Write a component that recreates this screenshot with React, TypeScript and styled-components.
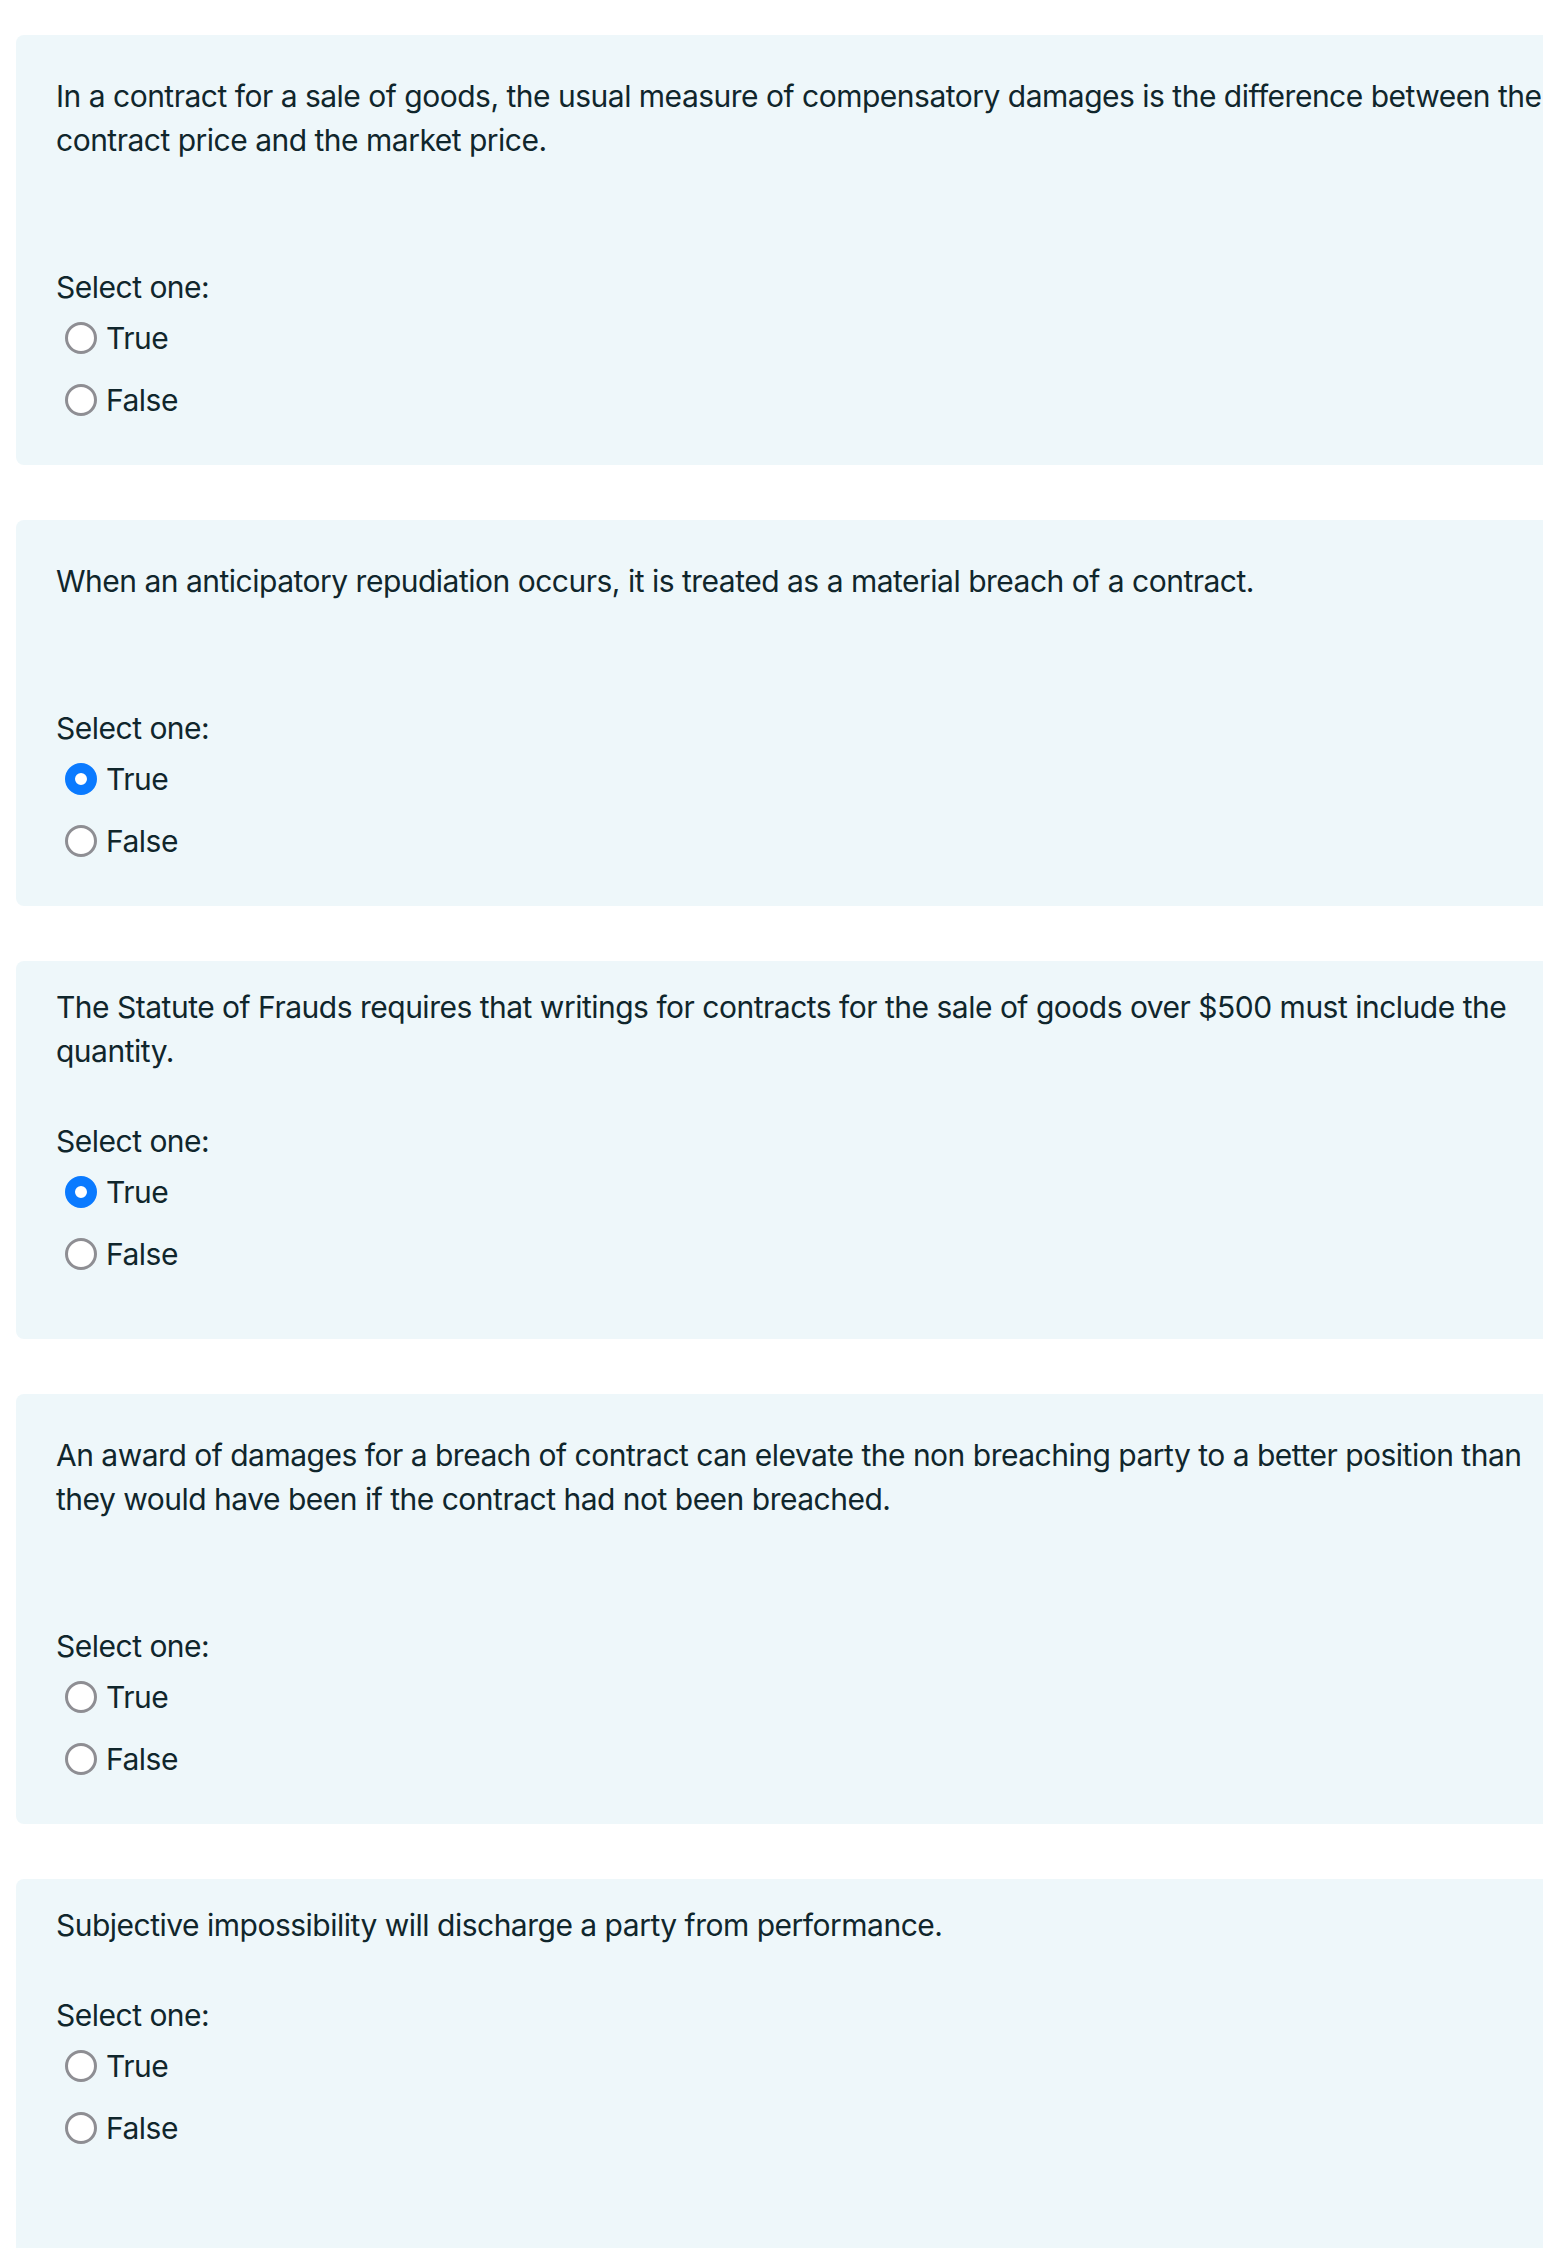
import React from 'react';
import styled, { createGlobalStyle } from 'styled-components';

const Global = createGlobalStyle`
  html, body { margin: 0; padding: 0; background: #ffffff; }
  body {
    font-family: Inter, "Noto Sans", "Liberation Sans", sans-serif;
    color: #10262c;
    letter-spacing: -0.5px;
    -webkit-font-smoothing: antialiased;
  }
`;

const Page = styled.main`
  height: 2248px;
  overflow: hidden;
  box-sizing: border-box;
  padding: 35px 0 0 16px;
  display: flex;
  flex-direction: column;
  gap: 55px;
`;

const Card = styled.section<{ $top: number; $bottom: number }>`
  flex-shrink: 0;
  background: #eef7fa;
  border-radius: 8px 0 0 8px;
  padding: ${(p) => p.$top}px 0 ${(p) => p.$bottom}px 40px;
`;

const QuestionText = styled.p<{ $gap: number }>`
  margin: 0 0 ${(p) => p.$gap}px;
  font-size: 30px;
  line-height: 44px;
`;

const Prompt = styled.div`
  font-size: 30px;
  line-height: 40px;
`;

const Options = styled.div`
  display: flex;
  flex-direction: column;
`;

const Option = styled.label`
  display: flex;
  align-items: center;
  gap: 9px;
  height: 62px;
  padding-left: 9px;
  font-size: 30px;
  line-height: 40px;
`;

const Radio = styled.input.attrs({ type: 'radio' })`
  appearance: none;
  -webkit-appearance: none;
  margin: 0;
  flex-shrink: 0;
  width: 32px;
  height: 32px;
  box-sizing: border-box;
  border-radius: 50%;
  background: #ffffff;
  border: 3px solid #8e8e93;
  &:checked {
    border: 10px solid #0a7aff;
  }
`;

type Q = {
  text: string;
  selected: 'True' | 'False' | null;
  extra: boolean;
  bottom: number;
};

const questions: Q[] = [
  {
    text: 'In a contract for a sale of goods, the usual measure of compensatory damages is the difference between the contract price and the market price.',
    selected: null,
    extra: true,
    bottom: 34,
  },
  {
    text: 'When an anticipatory repudiation occurs, it is treated as a material breach of a contract.',
    selected: 'True',
    extra: true,
    bottom: 34,
  },
  {
    text: 'The Statute of Frauds requires that writings for contracts for the sale of goods over $500 must include the quantity.',
    selected: 'True',
    extra: false,
    bottom: 54,
  },
  {
    text: 'An award of damages for a breach of contract can elevate the non breaching party to a better position than they would have been if the contract had not been breached.',
    selected: null,
    extra: true,
    bottom: 34,
  },
  {
    text: 'Subjective impossibility will discharge a party from performance.',
    selected: null,
    extra: false,
    bottom: 140,
  },
];

export default function App() {
  return (
    <>
      <Global />
      <Page>
        {questions.map((q, i) => (
          <Card key={i} $top={q.extra ? 39 : 24} $bottom={q.bottom}>
            <QuestionText $gap={q.extra ? 105 : 48}>{q.text}</QuestionText>
            <Prompt>Select one:</Prompt>
            <Options>
              {(['True', 'False'] as const).map((opt) => (
                <Option key={opt}>
                  <Radio name={`q${i}`} defaultChecked={q.selected === opt} />
                  <span>{opt}</span>
                </Option>
              ))}
            </Options>
          </Card>
        ))}
      </Page>
    </>
  );
}
